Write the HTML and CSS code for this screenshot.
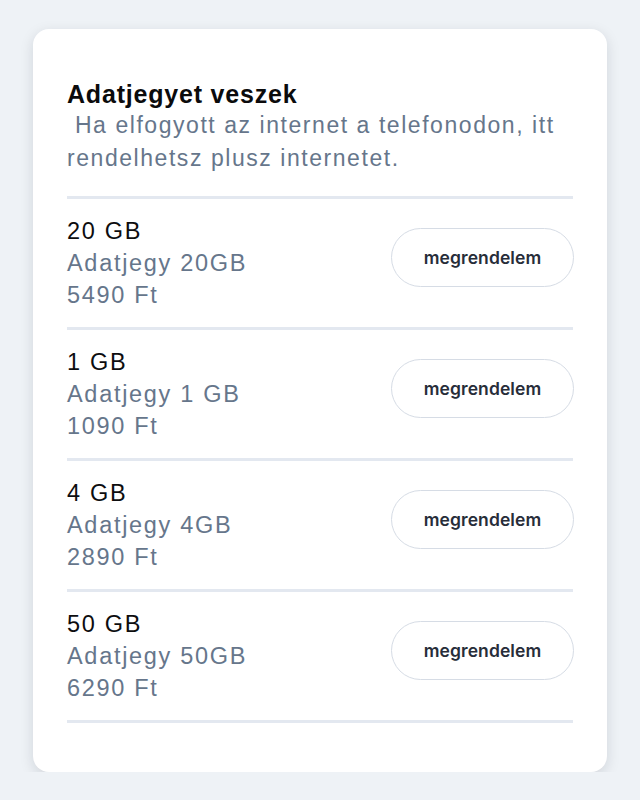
FILE: index.html
```html
<!DOCTYPE html>
<html lang="hu">
<head>
<meta charset="utf-8">
<title>Adatjegyet veszek</title>
<link rel="stylesheet" href="styles.css">
</head>
<body>
<div class="card">
  <h2 class="title">Adatjegyet veszek</h2>
  <p class="subtitle">&nbsp;Ha elfogyott az internet a telefonodon, itt rendelhetsz plusz internetet.</p>
  <ul class="list">
    <li class="item">
      <div class="info">
        <div class="name">20 GB</div>
        <div class="desc">Adatjegy 20GB</div>
        <div class="price">5490 Ft</div>
      </div>
      <button class="btn">megrendelem</button>
    </li>
    <li class="item">
      <div class="info">
        <div class="name">1 GB</div>
        <div class="desc">Adatjegy 1 GB</div>
        <div class="price">1090 Ft</div>
      </div>
      <button class="btn">megrendelem</button>
    </li>
    <li class="item">
      <div class="info">
        <div class="name">4 GB</div>
        <div class="desc">Adatjegy 4GB</div>
        <div class="price">2890 Ft</div>
      </div>
      <button class="btn">megrendelem</button>
    </li>
    <li class="item">
      <div class="info">
        <div class="name">50 GB</div>
        <div class="desc">Adatjegy 50GB</div>
        <div class="price">6290 Ft</div>
      </div>
      <button class="btn">megrendelem</button>
    </li>
  </ul>
</div>
</body>
</html>
```
FILE: styles.css
```css
html, body {
  margin: 0;
  padding: 0;
}
body {
  background: #eef2f6;
  font-family: "Liberation Sans", Arial, sans-serif;
  padding: 29px 33px 0 33px;
}
.card {
  width: 574px;
  box-sizing: border-box;
  background: #ffffff;
  border-radius: 16px;
  box-shadow: 0 4px 14px rgba(15, 23, 42, 0.13);
  padding: 50px 34px 49px 34px;
}
.title {
  margin: 0;
  font-size: 25px;
  line-height: 30px;
  font-weight: 700;
  letter-spacing: 0.8px;
  color: #0b0b0c;
}
.subtitle {
  margin: 0 0 21px 0;
  font-size: 23px;
  line-height: 33px;
  letter-spacing: 1.55px;
  color: #66768b;
}
.list {
  list-style: none;
  margin: 0;
  padding: 0;
  border-bottom: 3px solid #e3e8f0;
}
.item {
  display: flex;
  justify-content: space-between;
  align-items: flex-start;
  padding: 16px 0;
  border-top: 3px solid #e3e8f0;
}
.info {
  font-size: 23.5px;
  line-height: 32px;
  letter-spacing: 1.7px;
}
.name {
  color: #0d0d0f;
}
.desc, .price {
  color: #66768b;
}
.btn {
  margin-top: 13px;
  margin-right: -1px;
  width: 183px;
  height: 59px;
  box-sizing: border-box;
  background: #ffffff;
  border: 1.5px solid #d6dce5;
  border-radius: 30px;
  font-family: Inter, "Noto Sans", sans-serif;
  font-size: 17.5px;
  font-weight: 600;
  letter-spacing: 0.1px;
  color: #272d39;
  padding: 0;
  cursor: pointer;
}
```
